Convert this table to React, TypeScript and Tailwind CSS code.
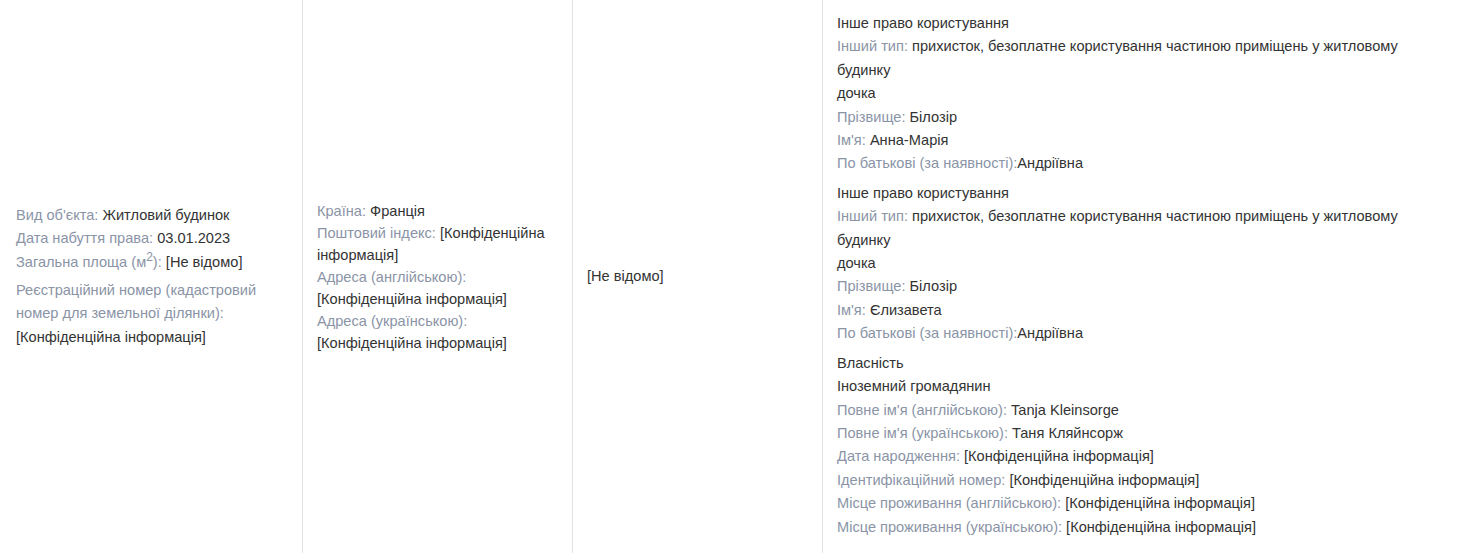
import React from 'react';

type Line = { label?: string; value?: string; sep?: string };

const owners: Line[][] = [
  [
    { value: 'Інше право користування' },
    { label: 'Інший тип', value: 'прихисток, безоплатне користування частиною приміщень у житловому будинку' },
    { value: 'дочка' },
    { label: 'Прізвище', value: 'Білозір' },
    { label: "Ім'я", value: 'Анна-Марія' },
    { label: 'По батькові (за наявності)', value: 'Андріївна', sep: ':' },
  ],
  [
    { value: 'Інше право користування' },
    { label: 'Інший тип', value: 'прихисток, безоплатне користування частиною приміщень у житловому будинку' },
    { value: 'дочка' },
    { label: 'Прізвище', value: 'Білозір' },
    { label: "Ім'я", value: 'Єлизавета' },
    { label: 'По батькові (за наявності)', value: 'Андріївна', sep: ':' },
  ],
  [
    { value: 'Власність' },
    { value: 'Іноземний громадянин' },
    { label: "Повне ім'я (англійською)", value: 'Tanja Kleinsorge' },
    { label: "Повне ім'я (українською)", value: 'Таня Кляйнсорж' },
    { label: 'Дата народження', value: '[Конфіденційна інформація]' },
    { label: 'Ідентифікаційний номер', value: '[Конфіденційна інформація]' },
    { label: 'Місце проживання (англійською)', value: '[Конфіденційна інформація]' },
    { label: 'Місце проживання (українською)', value: '[Конфіденційна інформація]' },
  ],
];

function Row({ line }: { line: Line }) {
  return (
    <div>
      {line.label && (
        <span className="text-[#8a94a6]">
          {line.label}
          {line.sep ?? ': '}
        </span>
      )}
      {line.value}
    </div>
  );
}

export default function App() {
  return (
    <div className="bg-white font-['Liberation_Sans',Arial,sans-serif] text-[14.6px] text-[#333333] leading-[23.3px] w-[1467px] h-[555px] overflow-hidden">
      <div className="flex min-h-[551px]">
        {/* ── Object ── */}
        <div className="w-[302px] shrink-0 flex flex-col justify-center pl-[16px] pr-[15px]">
          <div>
            <span className="text-[#8a94a6]">Вид об'єкта: </span>Житловий будинок
          </div>
          <div>
            <span className="text-[#8a94a6]">Дата набуття права: </span>03.01.2023
          </div>
          <div>
            <span className="text-[#8a94a6]">
              Загальна площа (м<sup className="text-[12px] leading-none">2</sup>):{' '}
            </span>
            [Не відомо]
          </div>
          <div className="mt-[5px]">
            <span className="text-[#8a94a6]">Реєстраційний номер (кадастровий номер для земельної ділянки): </span>
            [Конфіденційна інформація]
          </div>
        </div>

        {/* ── Address ── */}
        <div className="w-[270px] shrink-0 flex flex-col justify-center border-l border-[#e2e2e2] pl-[14px] pr-[12px] leading-[22px] pt-[2px]">
          <div>
            <span className="text-[#8a94a6]">Країна: </span>Франція
          </div>
          <div>
            <span className="text-[#8a94a6]">Поштовий індекс: </span>[Конфіденційна інформація]
          </div>
          <div>
            <span className="text-[#8a94a6]">Адреса (англійською): </span>[Конфіденційна інформація]
          </div>
          <div>
            <span className="text-[#8a94a6]">Адреса (українською): </span>[Конфіденційна інформація]
          </div>
        </div>

        {/* ── Price ── */}
        <div className="w-[250px] shrink-0 flex flex-col justify-center border-l border-[#e2e2e2] pl-[14px] pr-[15px]">
          <div>[Не відомо]</div>
        </div>

        {/* ── Rights ── */}
        <div className="flex-1 border-l border-[#e2e2e2] pl-[14px] pr-[15px] pt-[12px] pb-[14px] flex flex-col gap-[6px] leading-[23.4px]">
          {owners.map((group, i) => (
            <div key={i}>
              {group.map((line, j) => (
                <Row key={j} line={line} />
              ))}
            </div>
          ))}
        </div>
      </div>
    </div>
  );
}
